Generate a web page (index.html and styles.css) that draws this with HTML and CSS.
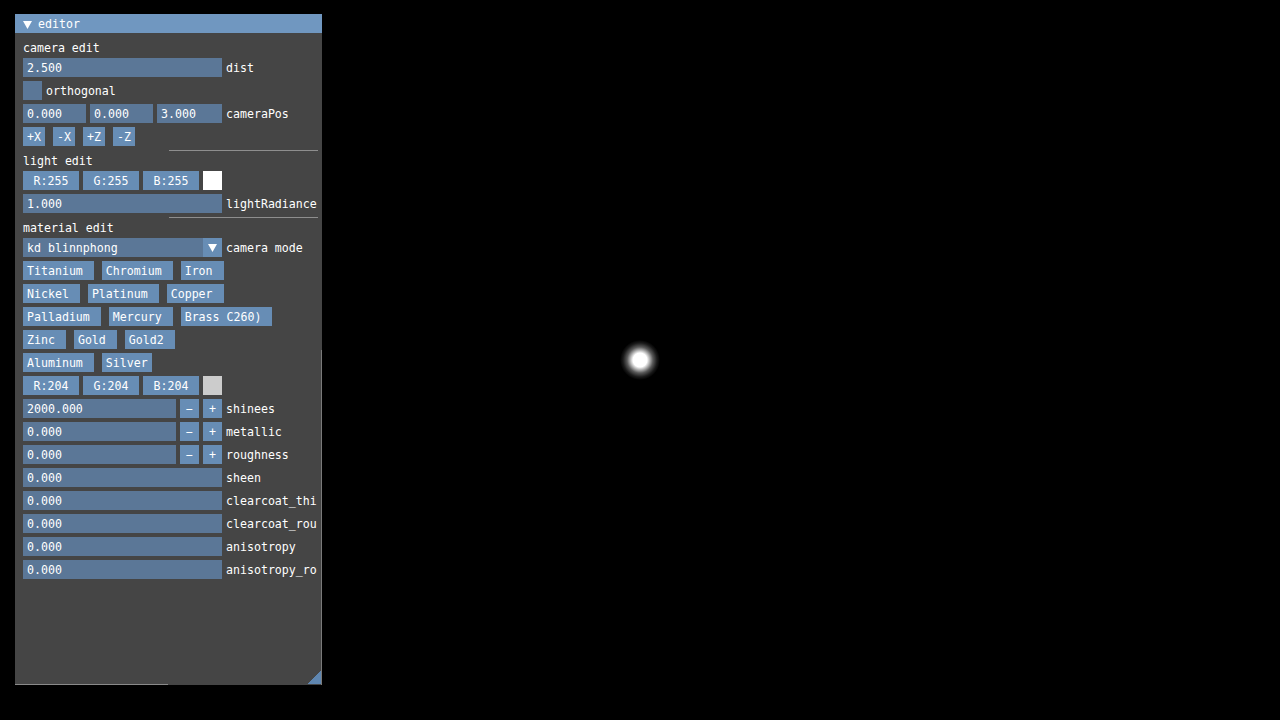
FILE: index.html
```html
<!DOCTYPE html>
<html>
<head>
<meta charset="utf-8">
<link rel="stylesheet" href="styles.css">
</head>
<body>
<div class="viewport">
  <div class="light"></div>
  <section class="window">
    <header class="title">
      <svg class="tri" width="9" height="8" viewBox="0 0 9 8"><polygon points="0,0 9,0 4.5,8" fill="#fff"/></svg>
      <span class="title-text">editor</span>
    </header>
    <div class="content">
      <div class="text">camera edit</div>
      <div class="row"><div class="field full">2.500</div><span class="label">dist</span></div>
      <div class="row"><div class="check"></div><span class="label">orthogonal</span></div>
      <div class="row">
        <div class="triple"><div class="field">0.000</div><div class="field">0.000</div><div class="field">3.000</div></div>
        <span class="label">cameraPos</span>
      </div>
      <div class="row wide"><div class="btn">+X</div><div class="btn">-X</div><div class="btn">+Z</div><div class="btn">-Z</div></div>
      <div class="sep"></div>
      <div class="text">light edit</div>
      <div class="row">
        <div class="btn rgb">R:255</div><div class="btn rgb">G:255</div><div class="btn rgb">B:255</div><div class="swatch white"></div>
      </div>
      <div class="row"><div class="field full">1.000</div><span class="label">lightRadiance</span></div>
      <div class="sep"></div>
      <div class="text">material edit</div>
      <div class="row">
        <div class="combo full"><span class="combo-text">kd blinnphong</span><span class="combo-arrow"><svg width="9" height="8" viewBox="0 0 9 8"><polygon points="0,0 9,0 4.5,8" fill="#fff"/></svg></span></div>
        <span class="label">camera mode</span>
      </div>
      <div class="row wide"><div class="btn">Titanium </div><div class="btn">Chromium </div><div class="btn">Iron </div></div>
      <div class="row wide"><div class="btn">Nickel </div><div class="btn">Platinum </div><div class="btn">Copper </div></div>
      <div class="row wide"><div class="btn">Palladium </div><div class="btn">Mercury </div><div class="btn">Brass C260) </div></div>
      <div class="row wide"><div class="btn">Zinc </div><div class="btn">Gold </div><div class="btn">Gold2 </div></div>
      <div class="row wide"><div class="btn">Aluminum </div><div class="btn">Silver</div></div>
      <div class="row">
        <div class="btn rgb">R:204</div><div class="btn rgb">G:204</div><div class="btn rgb">B:204</div><div class="swatch grey"></div>
      </div>
      <div class="row"><div class="field short">2000.000</div><div class="btn sq">−</div><div class="btn sq">+</div><span class="label">shinees</span></div>
      <div class="row"><div class="field short">0.000</div><div class="btn sq">−</div><div class="btn sq">+</div><span class="label">metallic</span></div>
      <div class="row"><div class="field short">0.000</div><div class="btn sq">−</div><div class="btn sq">+</div><span class="label">roughness</span></div>
      <div class="row"><div class="field full">0.000</div><span class="label">sheen</span></div>
      <div class="row"><div class="field full">0.000</div><span class="label">clearcoat_thi</span></div>
      <div class="row"><div class="field full">0.000</div><span class="label">clearcoat_rou</span></div>
      <div class="row"><div class="field full">0.000</div><span class="label">anisotropy</span></div>
      <div class="row"><div class="field full">0.000</div><span class="label">anisotropy_ro</span></div>
    </div>
    <div class="grip"></div>
  </section>
</div>
</body>
</html>
```
FILE: styles.css
```css
html, body {
  margin: 0;
  padding: 0;
  background: #000;
}
.viewport {
  position: relative;
  width: 1280px;
  height: 720px;
  overflow: hidden;
  background: #000;
  font-family: "DejaVu Sans Mono", "Liberation Mono", monospace;
  font-size: 11.6px;
  color: #fff;
}
.light {
  position: absolute;
  left: 620px;
  top: 340px;
  width: 40px;
  height: 40px;
  border-radius: 50%;
  background: radial-gradient(circle, #fff 0, #fff 7px, rgba(255,255,255,0.78) 9px, rgba(255,255,255,0.35) 13px, rgba(255,255,255,0.1) 17px, rgba(255,255,255,0) 20px);
}
.window {
  position: absolute;
  left: 15px;
  top: 14px;
  width: 307px;
  height: 671px;
  background: #454545;
  box-sizing: border-box;
}
.window::before {
  content: "";
  position: absolute;
  right: 0;
  top: 336px;
  width: 1px;
  height: 335px;
  background: #7a7a7a;
}
.window::after {
  content: "";
  position: absolute;
  left: 0;
  bottom: 0;
  width: 153px;
  height: 1px;
  background: #8a8a8a;
}
.title {
  height: 19px;
  box-sizing: border-box;
  background: #7097c0;
  display: flex;
  align-items: center;
  gap: 6px;
  padding-left: 8px;
  line-height: 13px;
}
.tri {
  display: block;
  margin-top: 2px;
}
.title-text {
  padding-top: 2px;
}
.content {
  padding: 8px 0 0 8px;
  display: flex;
  flex-direction: column;
  gap: 4px;
  line-height: 13px;
  white-space: pre;
}
.text {
  height: 13px;
  box-sizing: border-box;
  padding-top: 1px;
}
.row {
  display: flex;
  align-items: center;
  gap: 4px;
  height: 19px;
}
.row.wide {
  gap: 8px;
}
.label {
  padding-top: 2px;
}
.field {
  height: 19px;
  box-sizing: border-box;
  padding: 4px 4px 2px;
  background: #5b7797;
}
.full {
  width: 199px;
}
.short {
  width: 153px;
}
.triple {
  display: flex;
  gap: 4px;
  width: 199px;
}
.triple .field {
  width: 63px;
}
.triple .field:last-child {
  width: 65px;
}
.check {
  width: 19px;
  height: 19px;
  background: #5b7797;
}
.btn {
  height: 19px;
  box-sizing: border-box;
  padding: 4px 4px 2px;
  background: #678db5;
}
.btn.rgb {
  width: 56px;
  text-align: center;
}
.btn.sq {
  width: 19px;
  padding: 4px 0 2px;
  text-align: center;
}
.swatch {
  width: 19px;
  height: 19px;
}
.swatch.white {
  background: #fff;
}
.swatch.grey {
  background: #cccccc;
}
.combo {
  height: 19px;
  display: flex;
  background: #5b7797;
}
.combo-text {
  flex: 1;
  padding: 4px 4px 2px;
}
.combo-arrow {
  width: 19px;
  height: 19px;
  background: #678db5;
  display: flex;
  align-items: center;
  justify-content: center;
}
.combo-arrow svg {
  display: block;
}
.sep {
  height: 1px;
  width: 149px;
  margin-left: 146px;
  margin-bottom: -1px;
  background: #8e8e8e;
}
.grip {
  position: absolute;
  right: 1px;
  bottom: 1px;
  width: 13px;
  height: 13px;
  background: linear-gradient(135deg, transparent 50%, #5f86b0 50%);
}
```
